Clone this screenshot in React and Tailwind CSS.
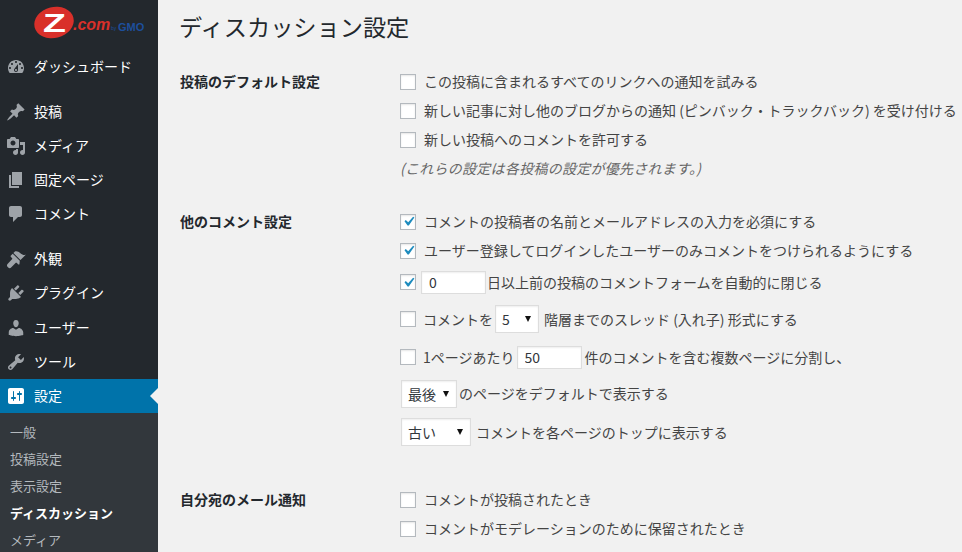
const ICONS = {
  dashboard: "M3.76 16h12.48c1.1-1.37 1.76-3.11 1.76-5 0-4.42-3.58-8-8-8s-8 3.58-8 8c0 1.89.66 3.63 1.76 5zM10 4c.55 0 1 .45 1 1s-.45 1-1 1-1-.45-1-1 .45-1 1-1zM6 6c.55 0 1 .45 1 1s-.45 1-1 1-1-.45-1-1 .45-1 1-1zm8 0c.55 0 1 .45 1 1s-.45 1-1 1-1-.45-1-1 .45-1 1-1zm-5.37 5.55L12 7v6c0 1.1-.9 2-2 2s-2-.9-2-2c0-.57.24-1.08.63-1.45zM4 10c.55 0 1 .45 1 1s-.45 1-1 1-1-.45-1-1 .45-1 1-1zm12 0c.55 0 1 .45 1 1s-.45 1-1 1-1-.45-1-1 .45-1 1-1zm-5 3c0-.55-.45-1-1-1s-1 .45-1 1 .45 1 1 1 1-.45 1-1z",
  post: "M10.44 3.02l1.82-1.82 6.36 6.35-1.83 1.82c-1.05-.68-2.48-.57-3.41.36l-.75.75c-.92.93-1.04 2.35-.35 3.41l-1.83 1.82-2.41-2.41-2.8 2.79c-.42.42-3.38 2.71-3.8 2.29s1.86-3.39 2.28-3.81l2.79-2.79L4.1 9.36l1.83-1.82c1.05.69 2.48.57 3.4-.36l.75-.75c.93-.92 1.05-2.35.36-3.41z",
  media: "M13 11V4c0-.55-.45-1-1-1h-1.67L9 1H5L3.67 3H2c-.55 0-1 .45-1 1v7c0 .55.45 1 1 1h10c.55 0 1-.45 1-1zM7 4.5c1.38 0 2.5 1.12 2.5 2.5S8.38 9.5 7 9.5 4.5 8.38 4.5 7 5.62 4.5 7 4.5zM14 6h5v10.5c0 1.38-1.12 2.5-2.5 2.5S14 17.88 14 16.5s1.12-2.5 2.5-2.5c.17 0 .34.02.5.05V9h-3V6zm-4 8.05V13h2v3.5c0 1.38-1.12 2.5-2.5 2.5S7 17.88 7 16.5 8.12 14 9.5 14c.17 0 .34.02.5.05z",
  page: "M6 15V2h10v13H6zm-1 1h8v2H3V5h2v11z",
  comment: "M5 2h9c1.1 0 2 .9 2 2v7c0 1.1-.9 2-2 2h-2l-5 5v-5H5c-1.1 0-2-.9-2-2V4c0-1.1.9-2 2-2z",
  appearance: "M14.48 11.06L7.41 3.99l1.5-1.5c.5-.56 2.3-.47 3.51.32 1.21.8 1.43 1.28 2.91 2.1 1.18.64 2.45 1.26 4.45.85zm-.71.71L6.7 4.7 4.93 6.47c-.39.39-.39 1.02 0 1.41l1.06 1.06c.39.39.39 1.03 0 1.41L1.54 15.02c-.78.78-.78 2.05 0 2.83l.71.71c.78.78 2.05.78 2.83 0l4.48-4.47c.39-.39 1.03-.39 1.41 0l1.06 1.06c.39.39 1.02.39 1.41 0z",
  plugin: "M13.11 4.36L9.87 7.6 8 5.73l3.24-3.24c.35-.34 1.05-.2 1.56.32.52.51.66 1.21.31 1.55zm-8 1.77l.91-1.12 9.01 9.01-1.19.84c-.71.71-2.63 1.16-3.82 1.16H6.14L4.9 17.26c-.59.59-1.54.59-2.12 0-.59-.58-.59-1.53 0-2.12l1.24-1.24v-3.88c0-1.13.4-3.19 1.09-3.89zm7.26 3.97l3.24-3.24c.34-.35 1.04-.21 1.55.31.52.51.66 1.21.31 1.55l-3.24 3.25z",
  user: "M10 9.25c-2.27 0-2.73-3.44-2.73-3.44C7 4.02 7.82 2 9.97 2c2.16 0 2.98 2.02 2.71 3.81 0 0-.41 3.44-2.68 3.44zm0 2.57L12.72 10c2.39 0 4.52 2.33 4.52 4.53v2.49s-3.65 1.13-7.24 1.13c-3.65 0-7.24-1.13-7.24-1.13v-2.49c0-2.25 1.94-4.48 4.47-4.48z",
  tool: "M16.68 9.77c-1.34 1.34-3.3 1.67-4.95.99l-5.41 6.52c-.99.99-2.59.99-3.58 0s-.99-2.59 0-3.57l6.52-5.42c-.68-1.65-.35-3.61.99-4.95 1.28-1.28 3.12-1.62 4.72-1.06l-2.89 2.89 2.82 2.82 2.86-2.87c.53 1.58.18 3.39-1 4.7zM3.81 16.21c.4.39 1.04.39 1.43 0 .4-.4.4-1.04 0-1.43-.39-.4-1.03-.4-1.43 0-.39.39-.39 1.03 0 1.43z",
  settings: "M18 16V4c0-1.1-.9-2-2-2H4c-1.1 0-2 .9-2 2v12c0 1.1.9 2 2 2h12c1.1 0 2-.9 2-2zM8 11h1c.55 0 1 .45 1 1s-.45 1-1 1H8v1.5c0 .28-.22.5-.5.5s-.5-.22-.5-.5V13H6c-.55 0-1-.45-1-1s.45-1 1-1h1V5.5c0-.28.22-.5.5-.5s.5.22.5.5V11zm5-2h-1c-.55 0-1-.45-1-1s.45-1 1-1h1V5.5c0-.28.22-.5.5-.5s.5.22.5.5V7h1c.55 0 1 .45 1 1s-.45 1-1 1h-1v5.5c0 .28-.22.5-.5.5s-.5-.22-.5-.5V9z",
};

function Icon({ name, active }) {
  return (
    <svg viewBox="0 0 20 20" className={active ? "w-5 h-5 fill-white shrink-0" : "w-5 h-5 fill-[#9ea3a8] shrink-0"}>
      <path fillRule="evenodd" d={ICONS[name]} />
    </svg>
  );
}

function MenuItem({ icon, label, active, className = "" }) {
  return (
    <div className={`relative flex items-center h-[34px] pl-[6px] gap-2 text-white ${active ? "bg-[#0073aa]" : ""} ${className}`}>
      <Icon name={icon} active={active} />
      <span className="text-[14px] leading-none pb-0.5">{label}</span>
      {active && (
        <span className="absolute right-0 top-[9px] w-0 h-0 border-y-[8px] border-y-transparent border-r-[8px] border-r-[#f1f1f1]" />
      )}
    </div>
  );
}

function Logo() {
  return (
    <div className="h-[50px] relative">
      <div className="absolute left-[34px] top-[7px] w-[40px] h-[31px] rounded-[50%] bg-[#d9302a] -rotate-[14deg]" />
      <span className="absolute left-[46px] top-[11px] w-[17px] text-center text-white font-bold text-[25px] leading-none scale-x-[1.5] font-['Liberation_Sans',sans-serif]">Z</span>
      <span className="absolute left-[73px] top-[17px] text-[#d9302a] font-bold italic text-[16px] leading-none font-['Liberation_Sans',sans-serif]">.com</span>
      <span className="absolute left-[111px] top-[26px] text-[#1d4f9c] text-[5px] leading-none font-['Liberation_Sans',sans-serif]">by</span>
      <span className="absolute left-[118px] top-[23px] text-[#1d4f9c] font-bold text-[10px] leading-none scale-x-110 origin-left font-['Liberation_Sans',sans-serif]">GMO</span>
    </div>
  );
}

function Sidebar() {
  const subs = [
    ["一般", false],
    ["投稿設定", false],
    ["表示設定", false],
    ["ディスカッション", true],
    ["メディア", false],
  ];
  return (
    <aside className="w-[158px] shrink-0 bg-[#23282d]">
      <Logo />
      <MenuItem icon="dashboard" label="ダッシュボード" />
      <div className="h-[11px]" />
      <MenuItem icon="post" label="投稿" />
      <MenuItem icon="media" label="メディア" />
      <MenuItem icon="page" label="固定ページ" />
      <MenuItem icon="comment" label="コメント" />
      <div className="h-[11px]" />
      <MenuItem icon="appearance" label="外観" />
      <MenuItem icon="plugin" label="プラグイン" />
      <MenuItem icon="user" label="ユーザー" className="mt-px" />
      <MenuItem icon="tool" label="ツール" />
      <MenuItem icon="settings" label="設定" active />
      <div className="bg-[#32373c] pt-[5px] pb-2">
        {subs.map(([t, on]) => (
          <div key={t} className={`h-[27px] flex items-center pl-[10px] text-[13px] ${on ? "text-white font-semibold" : "text-[#b4b9be]"}`}>{t}</div>
        ))}
      </div>
    </aside>
  );
}

function Check({ checked }) {
  return (
    <span className="w-4 h-4 shrink-0 border border-[#b4b9be] bg-white shadow-[inset_0_1px_2px_rgba(0,0,0,0.1)] flex items-center justify-center">
      {checked && (
        <svg viewBox="0 0 20 20" className="w-[19px] h-[19px] fill-[#1e8cbe] shrink-0">
          <path d="M14.83 4.89l1.34.94-5.81 8.38H9.02L5.78 9.67l1.34-1.25 2.57 2.4z" />
        </svg>
      )}
    </span>
  );
}

function NumberBox({ value }) {
  return (
    <input
      readOnly
      value={value}
      className="block w-[65px] h-[23px] shrink-0 border border-[#ddd] bg-white px-[7px] text-[14px] text-[#32373c] outline-none shadow-[inset_0_1px_2px_rgba(0,0,0,0.07)]"
    />
  );
}

function SelectBox({ value, w }) {
  return (
    <span className={`${w} h-[28px] shrink-0 border border-[#ddd] bg-white pl-[6px] pr-[7px] flex items-center justify-between text-[14px] text-[#32373c] shadow-[inset_0_1px_2px_rgba(0,0,0,0.07)]`}>
      <span>{value}</span>
      <span className="w-0 h-0 border-x-[3.5px] border-x-transparent border-t-[6px] border-t-[#111]" />
    </span>
  );
}

function Row({ h, children, className = "" }) {
  return <div className={`flex items-center whitespace-nowrap ${h} ${className}`}>{children}</div>;
}

function Section({ title, className = "", children }) {
  return (
    <section className={`flex ${className}`}>
      <h2 className="w-[220px] shrink-0 text-[14px] font-bold text-[#23282d] leading-[28px]">{title}</h2>
      <div className="flex-1 min-w-0 text-[14px] text-[#444]">{children}</div>
    </section>
  );
}

export default function App() {
  return (
    <div className="flex h-[552px] w-[962px] overflow-hidden bg-[#f1f1f1] font-['Noto_Sans_CJK_JP','Liberation_Sans',sans-serif]">
      <Sidebar />
      <main className="flex-1 min-w-0 pl-[22px]">
        <h1 className="text-[23.2px] leading-none text-[#23282d] pt-[15px] h-[67px] -ml-px">ディスカッション設定</h1>
        <Section title="投稿のデフォルト設定">
          <Row h="h-[29px]" className="gap-2"><Check /><span>この投稿に含まれるすべてのリンクへの通知を試みる</span></Row>
          <Row h="h-[29px]" className="gap-2"><Check /><span>新しい記事に対し他のブログからの通知 (ピンバック・トラックバック) を受け付ける</span></Row>
          <Row h="h-[29px]" className="gap-2"><Check /><span>新しい投稿へのコメントを許可する</span></Row>
          <Row h="h-[29px]"><span className="text-[14px] italic text-[#666] tracking-[0.27px]">(これらの設定は各投稿の設定が優先されます。)</span></Row>
        </Section>
        <Section title="他のコメント設定" className="mt-6">
          <Row h="h-[29px]" className="gap-2"><Check checked /><span>コメントの投稿者の名前とメールアドレスの入力を必須にする</span></Row>
          <Row h="h-[29px]" className="gap-2"><Check checked /><span>ユーザー登録してログインしたユーザーのみコメントをつけられるようにする</span></Row>
          <Row h="h-[34px]"><Check checked /><span className="ml-[5px]"><NumberBox value="0" /></span><span className="ml-px">日以上前の投稿のコメントフォームを自動的に閉じる</span></Row>
          <Row h="h-[40px]"><Check /><span className="ml-[7px]">コメントを</span><span className="ml-[2px]"><SelectBox value="5" w="w-[44px]" /></span><span className="ml-[5px]">階層までのスレッド (入れ子) 形式にする</span></Row>
          <Row h="h-[36px]"><Check /><span className="ml-[7px]">1ページあたり</span><span className="ml-[2px]"><NumberBox value="50" /></span><span className="ml-[3px]">件のコメントを含む複数ページに分割し、</span></Row>
          <Row h="h-[36px]"><span className="ml-px mt-0.5"><SelectBox value="最後" w="w-[56px]" /></span><span className="ml-[2px]">のページをデフォルトで表示する</span></Row>
          <Row h="h-[42px]"><span className="ml-px"><SelectBox value="古い" w="w-[70px]" /></span><span className="ml-[5px]">コメントを各ページのトップに表示する</span></Row>
        </Section>
        <Section title="自分宛のメール通知" className="mt-8">
          <Row h="h-[29px]" className="gap-2"><Check /><span>コメントが投稿されたとき</span></Row>
          <Row h="h-[29px]" className="gap-2"><Check /><span>コメントがモデレーションのために保留されたとき</span></Row>
        </Section>
      </main>
    </div>
  );
}
